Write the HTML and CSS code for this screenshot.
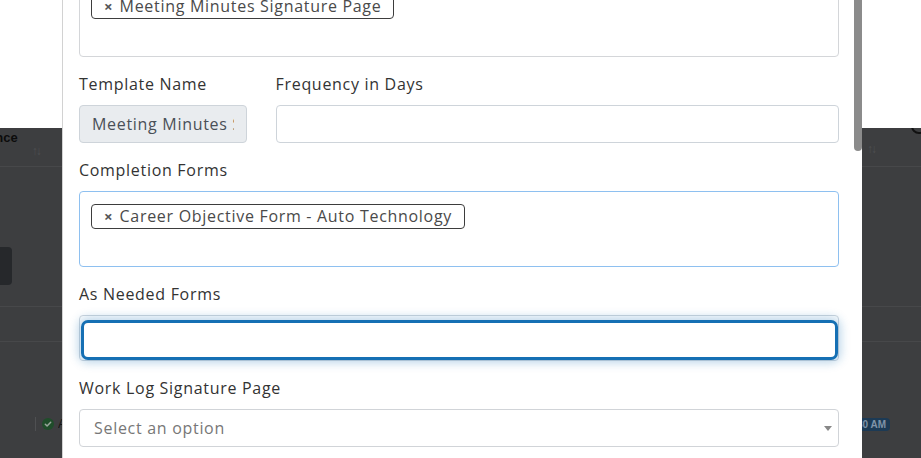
FILE: index.html
```html
<!DOCTYPE html>
<html lang="en">
<head>
<meta charset="utf-8">
<title>Edit Template</title>
<link rel="stylesheet" href="styles.css">
</head>
<body>
  <div class="page">
    <div class="topbar"></div>
    <div class="screen">
      <div class="thead">
        <div class="th th-left"><span class="th-title">Compliance</span><span class="sort">↑↓</span></div>
        <div class="th th-right"><span class="sort">↑↓</span><span class="th-icon"></span></div>
      </div>
      <div class="toolbar"><span class="dark-btn"></span></div>
      <div class="trow"></div>
      <div class="status-row">
        <div class="status-left"><span class="divider"></span><span class="ok-dot"><svg viewBox="0 0 12 12" width="12" height="12"><circle cx="6" cy="6" r="6" fill="#1f4d2a"/><path d="M3.3 6.2l1.8 1.8 3.6-3.7" fill="none" stroke="#9aa59c" stroke-width="1.5" stroke-linecap="round" stroke-linejoin="round"/></svg></span><span class="status-text">Approved</span></div>
        <div class="status-right"><span class="time-badge">10:30 AM</span></div>
      </div>
    </div>
  </div>

  <!-- template modal -->
  <div class="modal">
    <div class="scroll-thumb"></div>
    <form class="modal-form">
      <div class="field">
        <div class="tagbox">
          <span class="chip"><span class="chip-x">×</span>Meeting Minutes Signature Page</span>
        </div>
      </div>

      <div class="field-row">
        <div class="field">
          <label class="label">Template Name</label>
          <input class="input input-disabled" type="text" value="Meeting Minutes Signature Page" disabled>
        </div>
        <div class="field">
          <label class="label">Frequency in Days</label>
          <input class="input" type="text">
        </div>
      </div>

      <div class="field">
        <label class="label">Completion Forms</label>
        <div class="tagbox tagbox-active">
          <span class="chip"><span class="chip-x">×</span>Career Objective Form - Auto Technology</span>
        </div>
      </div>

      <div class="field">
        <label class="label">As Needed Forms</label>
        <div class="multi">
          <div class="multi-search"></div>
        </div>
      </div>

      <div class="field">
        <label class="label">Work Log Signature Page</label>
        <div class="select">
          <span class="placeholder">Select an option</span>
          <span class="caret"></span>
        </div>
      </div>
    </form>
  </div>
</body>
</html>
```
FILE: styles.css
```css
* {
  box-sizing: border-box;
}

html, body {
  margin: 0;
  padding: 0;
  width: 921px;
  height: 458px;
  overflow: hidden;
  font-family: "Open Sans", "Liberation Sans", sans-serif;
}

/* ---------- page under the backdrop ---------- */
.page {
  display: flex;
  flex-direction: column;
  height: 458px;
}

.topbar {
  height: 128px;
  background: #ffffff;
  position: relative;
  z-index: 1;
}

.screen {
  flex: 1;
  background: #3d3e40;
  display: flex;
  flex-direction: column;
  overflow: hidden;
}

.thead {
  height: 39px;
  border-bottom: 1px solid #47484a;
  display: flex;
  justify-content: space-between;
}

.th {
  display: flex;
  align-items: flex-start;
}

.th-left {
  margin-left: -56px;
  gap: 14px;
  padding-top: 2px;
}

.th-title {
  font-family: "Liberation Sans", sans-serif;
  font-size: 13px;
  font-weight: 600;
  color: #0c0c0c;
}

.sort {
  font-size: 12px;
  color: #4e4f51;
  margin-top: 12px;
  letter-spacing: -2px;
}

.th-right {
  gap: 36px;
}

.th-icon {
  width: 16px;
  height: 16px;
  border: 2px solid #111;
  border-radius: 50%;
  margin-top: -10px;
  margin-right: -6px;
}

.toolbar {
  margin-top: 80px;
  height: 38px;
}

.dark-btn {
  display: block;
  width: 60px;
  height: 38px;
  margin-left: -48px;
  background: #26282b;
  border-radius: 4px;
}

.trow {
  margin-top: 21px;
  height: 36px;
  border-top: 1px solid #47484a;
  border-bottom: 1px solid #47484a;
}

.status-row {
  margin-top: 75px;
  height: 14px;
  display: flex;
  justify-content: space-between;
  align-items: center;
}

/* left cell of the status row ends where the modal begins */
.status-left {
  display: flex;
  align-items: center;
  gap: 4px;
  margin-left: 35px;
  width: 27px;
  overflow: hidden;
  flex-shrink: 0;
}

.divider {
  width: 1px;
  height: 14px;
  background: #4f5052;
  margin-right: 2px;
  flex-shrink: 0;
}

.ok-dot {
  display: flex;
  flex-shrink: 0;
}

.status-text {
  font-family: "Liberation Sans", sans-serif;
  font-size: 12px;
  color: #151515;
  white-space: nowrap;
  overflow: hidden;
  min-width: 0;
}

.time-badge {
  display: block;
  margin-right: 31px;
  padding: 0 4px;
  height: 13px;
  line-height: 13px;
  border-radius: 4px;
  background: #1c3a55;
  color: #7f93a8;
  font-family: "Liberation Sans", sans-serif;
  font-weight: 700;
  font-size: 10px;
}

/* ---------- modal ---------- */
.modal {
  position: absolute;
  top: 0;
  left: 62px;
  width: 800px;
  height: 458px;
  background: #ffffff;
  border-left: 1px solid #d2d2d2;
  padding: 0 23px 0 16px;
  overflow: hidden;
  z-index: 2;
}

.scroll-thumb {
  position: absolute;
  top: -12px;
  right: 0;
  width: 8px;
  height: 163px;
  background: #8b8b8b;
  border-radius: 4px;
}

/* the form body is scrolled part way down */
.modal-form {
  margin-top: -19px;
  color: #333333;
  font-size: 16px;
  letter-spacing: 0.7px;
}

.field {
  margin-bottom: 16px;
}

.field-row {
  display: grid;
  grid-template-columns: calc(25% - 22.5px) 1fr;
  column-gap: 29px;
}

.label {
  display: block;
  height: 24px;
  line-height: 23px;
  margin-bottom: 8px;
  color: #333333;
  font-size: 16px;
}

.input {
  display: block;
  width: 100%;
  height: 38px;
  padding: 0 12px;
  border: 1px solid #ced4da;
  border-radius: 4px;
  font-family: inherit;
  font-size: 16px;
  letter-spacing: 0.7px;
  color: #495057;
  background: #ffffff;
  outline: none;
}

.input-disabled {
  background: #e9ecef;
  color: #495057;
  -webkit-text-fill-color: #495057;
  opacity: 1;
}

.tagbox {
  height: 76px;
  padding: 12px 11px;
  border: 1px solid #d4d6d9;
  border-radius: 4px;
}

.tagbox-active {
  border-color: #8ec0f0;
}

.chip {
  display: inline-flex;
  align-items: center;
  height: 25px;
  padding: 0 12px;
  border: 1px solid #3d3d3d;
  border-radius: 4px;
  color: #4a4a4a;
  font-size: 16px;
  line-height: 23px;
}

.chip-x {
  font-weight: 700;
  color: #555555;
  font-size: 15px;
  margin-right: 7px;
  letter-spacing: 0;
}

.multi {
  height: 46px;
  padding: 4px 0 0 1px;
  border: 1px solid #cfd6dd;
  border-radius: 4px;
}

.multi-search {
  height: 40px;
  border: 3px solid #1670b4;
  border-radius: 7px;
  background: #ffffff;
  box-shadow: 0 0 10px 3px rgba(22, 112, 180, 0.28);
}

.select {
  display: flex;
  align-items: center;
  justify-content: space-between;
  height: 38px;
  padding: 0 6px 0 14px;
  border: 1px solid #d1d4d8;
  border-radius: 4px;
}

.placeholder {
  color: #777777;
  font-size: 16px;
}

.caret {
  width: 0;
  height: 0;
  border-left: 4px solid transparent;
  border-right: 4px solid transparent;
  border-top: 5px solid #888888;
}
```
